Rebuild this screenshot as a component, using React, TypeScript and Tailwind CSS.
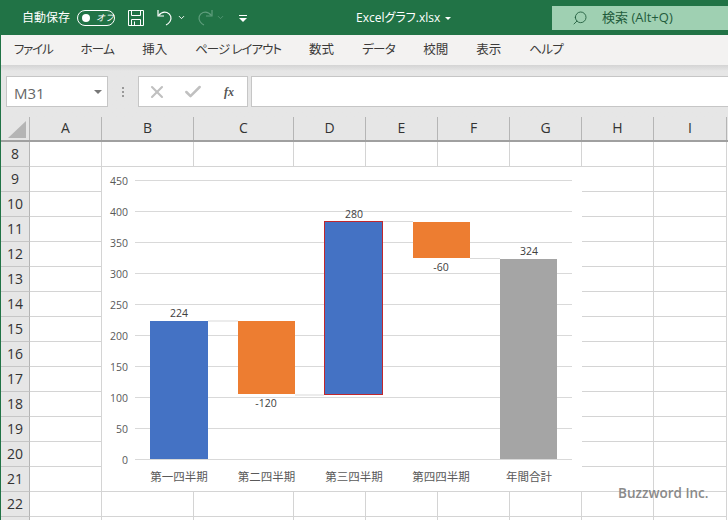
import React from 'react';
import { ChevronDown, Search, X, Check } from 'lucide-react';

const tabs = [
  { name: 'ファイル', tracking: 'tracking-[-1.2px]' },
  { name: 'ホーム', tracking: 'tracking-[-0.7px]' },
  { name: '挿入', tracking: 'tracking-normal' },
  { name: 'ページ レイアウト', tracking: 'tracking-[-1px]' },
  { name: '数式', tracking: 'tracking-normal' },
  { name: 'データ', tracking: 'tracking-[-0.6px]' },
  { name: '校閲', tracking: 'tracking-normal' },
  { name: '表示', tracking: 'tracking-normal' },
  { name: 'ヘルプ', tracking: 'tracking-[-0.6px]' },
];
const columns = [
  { name: 'A', width: 'w-[72px]' },
  { name: 'B', width: 'w-[92px]' },
  { name: 'C', width: 'w-[100px]' },
  { name: 'D', width: 'w-[72px]' },
  { name: 'E', width: 'w-[72px]' },
  { name: 'F', width: 'w-[72px]' },
  { name: 'G', width: 'w-[72px]' },
  { name: 'H', width: 'w-[72px]' },
  { name: 'I', width: 'w-[73px]' },
];
const rows = [8, 9, 10, 11, 12, 13, 14, 15, 16, 17, 18, 19, 20, 21, 22];

const ticks = [450, 400, 350, 300, 250, 200, 150, 100, 50, 0];
const bars = [
  { x: 48, y: 154, w: 58, h: 138, fill: '#4472c4' },
  { x: 136, y: 154, w: 57, h: 73, fill: '#ed7d31' },
  { x: 222.5, y: 54.5, w: 58, h: 173, fill: '#4472c4', stroke: '#c0272d' },
  { x: 311, y: 55, w: 57, h: 36, fill: '#ed7d31' },
  { x: 398, y: 92, w: 57, h: 200, fill: '#a5a5a5' },
];
const connectors = [
  { x1: 106, x2: 136, y: 154 },
  { x1: 193, x2: 222, y: 228 },
  { x1: 281, x2: 311, y: 54.5 },
  { x1: 368, x2: 398, y: 91.5 },
];
const labels = [
  { x: 77, y: 150, text: '224' },
  { x: 164, y: 240, text: '-120' },
  { x: 252, y: 51, text: '280' },
  { x: 339, y: 104, text: '-60' },
  { x: 427, y: 88, text: '324' },
];
const categories = [
  { x: 77, text: '第一四半期' },
  { x: 164.5, text: '第二四半期' },
  { x: 252, text: '第三四半期' },
  { x: 339, text: '第四四半期' },
  { x: 427, text: '年間合計' },
];

const WaterfallChart: React.FC = () => (
  <svg width="480" height="324" viewBox="0 0 480 324" className="absolute left-[101px] top-[25px] bg-white">
    {ticks.map((tick, i) => (
      <g key={tick}>
        <line x1="33" x2="470" y1={13.5 + i * 31} y2={13.5 + i * 31} stroke="#d9d9d9" />
        <text x="26" y={18 + i * 31} textAnchor="end" fontSize="10.5" fill="#595959">
          {tick}
        </text>
      </g>
    ))}
    {connectors.map((c) => (
      <line key={c.x1} x1={c.x1} x2={c.x2} y1={c.y} y2={c.y} stroke="#d9d9d9" />
    ))}
    {bars.map((b) => (
      <rect key={b.x} x={b.x} y={b.y} width={b.w} height={b.h} fill={b.fill} stroke={b.stroke} />
    ))}
    {labels.map((l) => (
      <text key={l.text} x={l.x} y={l.y} textAnchor="middle" fontSize="10.5" fill="#404040">
        {l.text}
      </text>
    ))}
    {categories.map((c) => (
      <text key={c.text} x={c.x} y="314" textAnchor="middle" fontSize="11.5" fill="#595959">
        {c.text}
      </text>
    ))}
  </svg>
);

export default function App() {
  return (
    <div
      className="w-[728px] h-[520px] overflow-hidden border-l border-[#217346] bg-[#e6e6e6] text-[#444]"
      style={{ fontFamily: '"Open Sans", "Noto Sans CJK JP", sans-serif' }}
    >
      {/* title bar */}
      <div className="h-[35px] -ml-px flex items-center bg-[#217346] text-white relative">
        <span className="ml-[22px] text-[12px]">自動保存</span>
        <div className="ml-[7px] w-[38px] h-[16px] rounded-full border border-white flex items-center pl-[4px]">
          <span className="w-[8px] h-[8px] rounded-full bg-white" />
          <span className="ml-[6px] text-[9px] italic leading-none">オフ</span>
        </div>
        <svg width="16" height="16" viewBox="0 0 16 16" className="ml-[13px]" fill="none" stroke="#fff">
          <path d="M.5.5h15v15H.5z" />
          <path d="M3.5.5v5h9v-5M3.5 15.5v-6h9v6M6.5 11.5v4" />
        </svg>
        <svg width="17" height="17" viewBox="0 0 17 17" className="ml-[13px]" fill="none" stroke="#fff" strokeWidth="1.2">
          <path d="M1 1v6h6" />
          <path d="M1.5 6.5C4 3.5 7 2.5 10 3.5c4 1.500 5 6 3 9-1 1.500-2 2.500-4 3.500" />
        </svg>
        <ChevronDown size={9} strokeWidth={2.5} className="ml-[3px]" />
        <svg width="17" height="17" viewBox="0 0 17 17" className="ml-[10px]" fill="none" stroke="#5f9e7d" strokeWidth="1.2">
          <path d="M16 1v6h-6" />
          <path d="M15.500 6.500C13 3.500 10 2.500 7 3.500c-4 1.500-5 6-3 9 1 1.500 2 2.500 4 3.500" />
        </svg>
        <ChevronDown size={9} strokeWidth={2} className="ml-[3px] text-[#5f9e7d]" />
        <svg width="10" height="8" viewBox="0 0 10 8" className="ml-[13px] mt-[2px]" fill="#fff">
          <path d="M1 0h8v1H1zM1 3h8L5 7z" />
        </svg>
        <span className="absolute left-[356px] top-[9px] text-[12px] [font-feature-settings:'palt']">Excelグラフ.xlsx</span>
        <svg width="6" height="3" viewBox="0 0 6 3" className="absolute left-[445px] top-[17px]" fill="#fff">
          <path d="M0 0h6L3 3z" />
        </svg>
        <div className="absolute left-[552px] top-[6px] w-[176px] h-[24px] bg-[#9fd0b2] flex items-center text-[#1f5c3c]">
          <Search size={16} strokeWidth={1.3} className="ml-[20px] -scale-x-100" />
          <span className="ml-[14px] text-[13px]">検索 (Alt+Q)</span>
        </div>
      </div>

      {/* ribbon tabs */}
      <div className="h-[30px] flex items-center gap-[28px] pl-[13px] bg-[#f3f2f1] text-[12.5px] text-[#3b3a39] [font-feature-settings:'palt']">
        {tabs.map((tab) => (
          <span key={tab.name} className={tab.tracking}>
            {tab.name}
          </span>
        ))}
      </div>

      {/* formula bar */}
      <div className="h-[52px] pt-[11px] pl-[5px] flex bg-gradient-to-b from-[#d4d4d4] to-[#e6e6e6] to-[6px]">
        <div className="w-[102px] h-[31px] bg-white border border-[#c6c6c6] flex items-center justify-between pl-[7px] pr-[5px] text-[15px] text-[#666]">
          <span className="pt-[3px]">M31</span>
          <svg width="8" height="4" viewBox="0 0 8 4" fill="#777">
            <path d="M0 0h8L4 4z" />
          </svg>
        </div>
        <div className="w-[30px] h-[31px] flex flex-col items-center justify-center gap-[2px]">
          <span className="w-[2px] h-[2px] bg-[#999]" />
          <span className="w-[2px] h-[2px] bg-[#999]" />
          <span className="w-[2px] h-[2px] bg-[#999]" />
        </div>
        <div className="w-[110px] h-[31px] bg-white border border-[#c6c6c6] flex items-center pl-[8px]">
          <X size={20} strokeWidth={2.5} className="text-[#c0c0c0]" />
          <Check size={20} strokeWidth={3} className="ml-[16px] text-[#c0c0c0]" />
          <span
            className="ml-[21px] text-[12px] italic font-bold text-[#555]"
            style={{ fontFamily: '"Liberation Serif", serif' }}
          >
            fx
          </span>
        </div>
        <div className="ml-[3px] flex-1 h-[31px] bg-white border border-[#c6c6c6] border-r-0" />
      </div>

      {/* column headers */}
      <div className="h-[25px] flex border-b-2 border-[#a0a0a0] text-[14px] text-[#333]">
        <div className="w-[29px] shrink-0 relative border-r border-[#b5b5b5]">
          <svg width="18" height="17" viewBox="0 0 18 17" className="absolute right-[3px] bottom-[2px]" fill="#b5b5b5">
            <path d="M18 0v17H0z" />
          </svg>
        </div>
        {columns.map((col) => (
          <div key={col.name} className={`${col.width} shrink-0 flex items-center justify-center pb-[2px] border-r border-[#b5b5b5]`}>
            {col.name}
          </div>
        ))}
      </div>

      {/* sheet */}
      <div className="relative bg-white">
        {rows.map((row) => (
          <div key={row} className="h-[25px] flex">
            <div className="w-[29px] shrink-0 flex items-center justify-center pb-[2px] bg-[#e6e6e6] border-r border-b border-[#b5b5b5] border-b-[#c6c6c6] text-[14px] text-[#333]">
              {row}
            </div>
            {columns.map((col) => (
              <div key={col.name} className={`${col.width} shrink-0 border-r border-b border-[#d4d4d4]`} />
            ))}
          </div>
        ))}
        <div className="h-[25px] flex">
          <div className="w-[29px] shrink-0 bg-[#e6e6e6] border-r border-[#b5b5b5]" />
          {columns.map((col) => (
            <div key={col.name} className={`${col.width} shrink-0 border-r border-[#d4d4d4]`} />
          ))}
        </div>
        <WaterfallChart />
        <span className="absolute left-[617px] top-[341px] text-[13.5px] font-semibold text-[#8a8a8a] whitespace-nowrap">
          Buzzword Inc.
        </span>
      </div>
    </div>
  );
}
